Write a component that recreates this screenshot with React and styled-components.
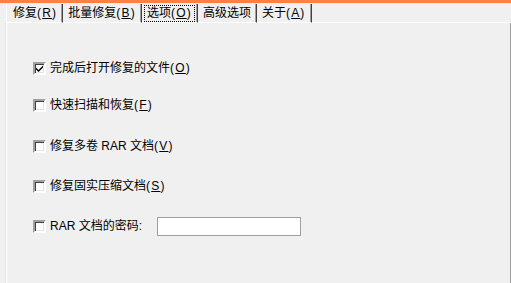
import React from 'react';
import styled, { createGlobalStyle } from 'styled-components';

const GlobalStyle = createGlobalStyle`
  html, body {
    margin: 0;
    padding: 0;
    background: #f0f0f0;
  }
  body {
    font-family: "Liberation Sans", "Noto Sans CJK SC", sans-serif;
    font-size: 12px;
    color: #000;
  }
`;

const tabs = [
    { label: '修复', key: 'R' },
    { label: '批量修复', key: 'B' },
    { label: '选项', key: 'O', active: true },
    { label: '高级选项' },
    { label: '关于', key: 'A' },
];

const options = [
    { label: '完成后打开修复的文件', key: 'O', checked: true, top: 39 },
    { label: '快速扫描和恢复', key: 'F', top: 24 },
    { label: '修复多卷 RAR 文档', key: 'V', top: 28 },
    { label: '修复固实压缩文档', key: 'S', top: 27 },
];

function Label({ text, hotkey }) {
    return (
        <>
            {text}
            {hotkey && <Hotkey>(<u>{hotkey}</u>)</Hotkey>}
        </>
    );
}

function Check({ checked }) {
    return (
        <CheckBox>
            {checked && (
                <svg width="9" height="9" viewBox="0 0 9 9">
                    <path d="M1 3.5 L3.5 6 L8 1.5 L8 3.5 L3.5 8 L1 5.5 Z" fill="#000" />
                </svg>
            )}
        </CheckBox>
    );
}

export default function App() {
    return (
        <Window>
            <GlobalStyle />
            <TopBar />
            <TabStrip>
                {tabs.map((t) => (
                    <Tab key={t.label} $first={t === tabs[0]}>
                        <TabLabel $active={t.active}>
                            <Label text={t.label} hotkey={t.key} />
                        </TabLabel>
                    </Tab>
                ))}
                <TabFill />
            </TabStrip>
            <Panel>
                {options.map((o) => (
                    <OptionRow key={o.label} $top={o.top}>
                        <Check checked={o.checked} />
                        <span><Label text={o.label} hotkey={o.key} /></span>
                    </OptionRow>
                ))}
                <OptionRow $top={24}>
                    <Check />
                    <span>RAR 文档的密码:</span>
                    <PasswordInput type="password" />
                </OptionRow>
            </Panel>
        </Window>
    );
}

const Window = styled.div`
    width: 511px;
    height: 283px;
    overflow: hidden;
    background: #f0f0f0;
`;

const TopBar = styled.div`
    height: 3px;
    background: #ff8040;
`;

const TabStrip = styled.div`
    display: flex;
    height: 19px;
    margin-top: 1px;
    padding-left: 6px;
`;

const Tab = styled.div`
    display: flex;
    align-items: center;
    padding: 0 2px 0 ${(p) => (p.$first ? 3 : 2)}px;
    border-left: ${(p) => (p.$first ? '1px solid #fff' : 'none')};
    border-right: 1px solid #404040;
    box-shadow: inset -1px 0 #a0a0a0;
    border-bottom: 1px solid #fff;
    line-height: 15px;
`;

const TabLabel = styled.span`
    display: inline-block;
    padding: 0 2px;
    height: 15px;
    line-height: 15px;
    border: 1px dotted ${(p) => (p.$active ? '#000' : 'transparent')};
`;

const Hotkey = styled.span`
    letter-spacing: 1.2px;
`;

const TabFill = styled.div`
    flex: 1;
    border-bottom: 1px solid #fff;
`;

const Panel = styled.div`
    display: flex;
    flex-direction: column;
    margin-left: 5px;
    height: 260px;
    border-left: 1px solid #e3e3e3;
    box-shadow: inset 1px 0 #fff;
    border-right: 1px solid #a0a0a0;
    padding-left: 27px;
`;

const OptionRow = styled.div`
    display: flex;
    align-items: center;
    gap: 4px;
    margin-top: ${(p) => p.$top}px;
    line-height: 13px;
    white-space: pre;
`;

const CheckBox = styled.span`
    flex: none;
    display: flex;
    align-items: center;
    justify-content: center;
    width: 9px;
    height: 9px;
    background: #fff;
    border: 2px solid;
    border-color: #a0a0a0 #fff #fff #a0a0a0;
    box-shadow: inset 1px 1px #404040, inset -1px -1px #e3e3e3;
`;

const PasswordInput = styled.input`
    width: 138px;
    height: 13px;
    margin-left: 11px;
    padding: 2px;
    background: #fff;
    border: 1px solid #a0a0a0;
    outline: none;
    font: inherit;
`;
